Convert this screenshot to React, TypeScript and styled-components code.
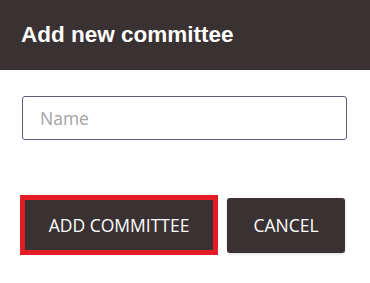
import React from 'react';
import styled, { createGlobalStyle } from 'styled-components';

const Global = createGlobalStyle`
  html, body {
    margin: 0;
    padding: 0;
    background: #ffffff;
  }
`;

const App = () => {
  return (
    <>
      <Global />
      <Dialog>
        <Header>
          <Title>Add new committee</Title>
        </Header>
        <Body>
          <NameInput placeholder='Name' autoFocus />
          <Actions>
            <Button $focused $width={198}>ADD COMMITTEE</Button>
            <Button $width={118}>CANCEL</Button>
          </Actions>
        </Body>
      </Dialog>
    </>
  );
};

const Dialog = styled.div`
  width: 370px;
  height: 283px;
  background: #ffffff;
  display: flex;
  flex-direction: column;
`;

const Header = styled.div`
  height: 70px;
  background: #3a3133;
  display: flex;
  align-items: center;
  padding: 0 21px;
  box-sizing: border-box;
`;

const Title = styled.h2`
  margin: 0;
  color: #ffffff;
  font-family: 'Liberation Sans', Arial, sans-serif;
  font-weight: bold;
  font-size: 22.5px;
  line-height: 1;
  padding-top: 1px;
`;

const Body = styled.div`
  padding: 26px 23px 0 22px;
  display: flex;
  flex-direction: column;
`;

const NameInput = styled.input`
  width: 325px;
  height: 44px;
  box-sizing: border-box;
  border: 1px solid #5d5b7e;
  border-radius: 3px;
  padding: 0 0 0 17px;
  font-family: 'Open Sans', sans-serif;
  font-size: 17.5px;
  color: #333;
  caret-color: #444;
  outline: none;

  &::placeholder {
    color: #a3a3a3;
  }
`;

const Actions = styled.div`
  margin-top: 55px;
  margin-left: -2px;
  display: flex;
  align-items: center;
  gap: 9px;
`;

const Button = styled.button<{ $focused?: boolean; $width: number }>`
  width: ${p => p.$width}px;
  height: ${p => (p.$focused ? '60px' : '55px')};
  padding: 0;
  box-sizing: border-box;
  background: #3a3133;
  color: #ffffff;
  font-family: 'Open Sans', sans-serif;
  font-size: 17.5px;
  border: ${p => (p.$focused ? '5px solid #e21d26' : 'none')};
  border-radius: ${p => (p.$focused ? '0' : '3px')};
  cursor: pointer;
  box-shadow: ${p => (p.$focused ? 'none' : '0 1px 3px rgba(0,0,0,.15)')};
`;

export default App;
